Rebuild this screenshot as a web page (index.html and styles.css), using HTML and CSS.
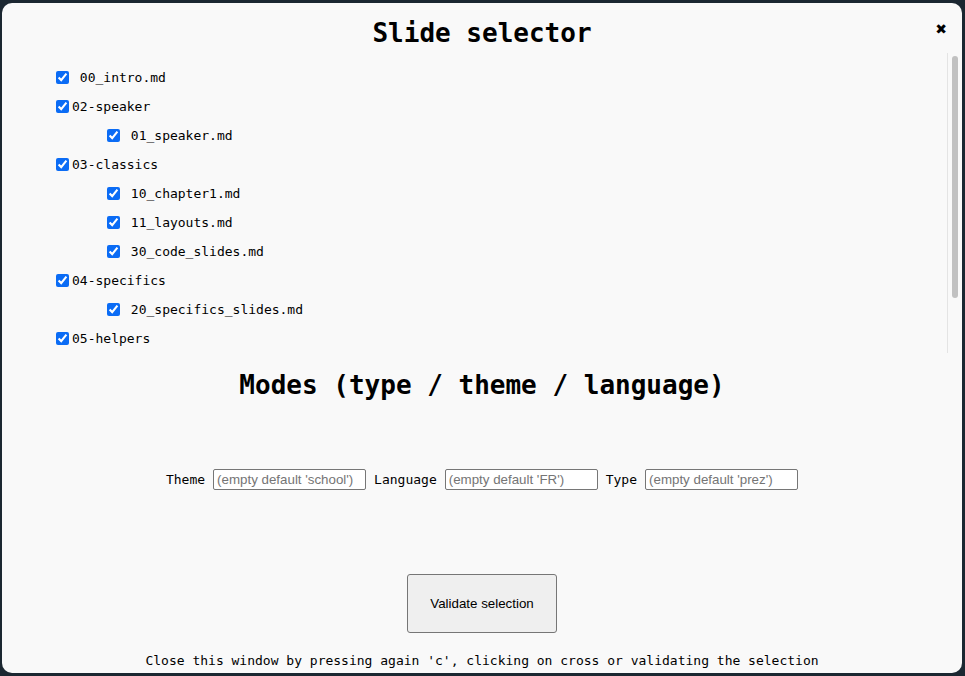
FILE: index.html
```html
<!DOCTYPE html>
<html lang="en">
<head>
<meta charset="utf-8">
<title>Slide selector</title>
<link rel="stylesheet" href="styles.css">
</head>
<body>
<div class="modal">
  <span class="close">✖</span>
  <h1 class="title">Slide selector</h1>
  <div class="tree-wrap">
    <div class="tree">
      <div class="row"><input type="checkbox" checked><span class="file"> 00_intro.md</span></div>
      <div class="row"><input type="checkbox" checked><span>02-speaker</span></div>
      <div class="row nested"><input type="checkbox" checked><span class="file"> 01_speaker.md</span></div>
      <div class="row"><input type="checkbox" checked><span>03-classics</span></div>
      <div class="row nested"><input type="checkbox" checked><span class="file"> 10_chapter1.md</span></div>
      <div class="row nested"><input type="checkbox" checked><span class="file"> 11_layouts.md</span></div>
      <div class="row nested"><input type="checkbox" checked><span class="file"> 30_code_slides.md</span></div>
      <div class="row"><input type="checkbox" checked><span>04-specifics</span></div>
      <div class="row nested"><input type="checkbox" checked><span class="file"> 20_specifics_slides.md</span></div>
      <div class="row"><input type="checkbox" checked><span>05-helpers</span></div>
    </div>
    <div class="scrollbar"><div class="thumb"></div></div>
  </div>
  <h2 class="subtitle">Modes (type / theme / language)</h2>
  <div class="modes">
    <label class="lbl">Theme</label>
    <input class="field" type="text" placeholder="(empty default 'school')">
    <label class="lbl">Language</label>
    <input class="field" type="text" placeholder="(empty default 'FR')">
    <label class="lbl">Type</label>
    <input class="field" type="text" placeholder="(empty default 'prez')">
  </div>
  <div class="actions">
    <button class="validate" type="button">Validate selection</button>
  </div>
  <p class="hint">Close this window by pressing again 'c', clicking on cross or validating the selection</p>
</div>
</body>
</html>
```

FILE: styles.css
```css
html, body {
  margin: 0;
  padding: 0;
}

body {
  background: #1b2731;
  width: 965px;
  height: 676px;
  overflow: hidden;
  font-family: "DejaVu Sans Mono", monospace;
  color: #000;
}

.modal {
  position: relative;
  margin: 3px 3px 3px 2px;
  height: 670px;
  box-sizing: border-box;
  background: #f9f9f9;
  border-radius: 10px;
  padding-top: 15px;
  overflow: hidden;
}

.close {
  position: absolute;
  top: 18px;
  right: 15px;
  font-family: "DejaVu Sans", sans-serif;
  font-size: 14px;
  line-height: 16px;
  color: #000;
}

.title,
.subtitle {
  margin: 0;
  font-size: 26px;
  line-height: 30px;
  font-weight: bold;
  text-align: center;
}

.tree-wrap {
  position: relative;
  margin-top: 5px;
  height: 300px;
}

.tree {
  height: 300px;
  overflow: hidden;
  box-sizing: border-box;
  padding: 9.5px 20px 0 50px;
}

.scrollbar {
  position: absolute;
  top: 0;
  right: 1px;
  width: 14px;
  height: 300px;
  box-sizing: border-box;
  border-left: 1px solid #e4e4e4;
  padding: 3px 3px 0 4px;
}

.thumb {
  height: 242px;
  background: #c1c1c1;
  border-radius: 4px;
}

.row {
  display: flex;
  align-items: center;
  height: 29px;
  font-size: 13px;
  line-height: 15px;
  white-space: pre;
}

.row.nested {
  padding-left: 51px;
}

.row input {
  margin: 0 3px 0 4px;
  width: 13px;
  height: 13px;
  accent-color: #0b6cf5;
}

.subtitle {
  margin-top: 17px;
}

.modes {
  margin-top: 69px;
  display: flex;
  justify-content: center;
  align-items: center;
  gap: 8px;
  height: 21px;
}

.lbl {
  font-size: 13px;
  line-height: 15px;
}

.field {
  width: 153px;
  height: 21px;
  box-sizing: border-box;
  margin: 0;
  padding: 1px 3px;
  border: 1px solid #767676;
  border-radius: 2px;
  background: #fff;
  font-family: "Liberation Sans", Arial, sans-serif;
  font-size: 13.33px;
}

.field::placeholder {
  color: #757575;
}

.actions {
  margin-top: 84px;
  display: flex;
  justify-content: center;
}

.validate {
  width: 150px;
  height: 59px;
  margin: 0;
  box-sizing: border-box;
  background: #efefef;
  border: 1px solid #767676;
  border-radius: 3px;
  font-family: "Liberation Sans", Arial, sans-serif;
  font-size: 13.33px;
  color: #000;
}

.hint {
  margin: 20px 0 0;
  font-size: 13px;
  line-height: 15px;
  text-align: center;
}
```
